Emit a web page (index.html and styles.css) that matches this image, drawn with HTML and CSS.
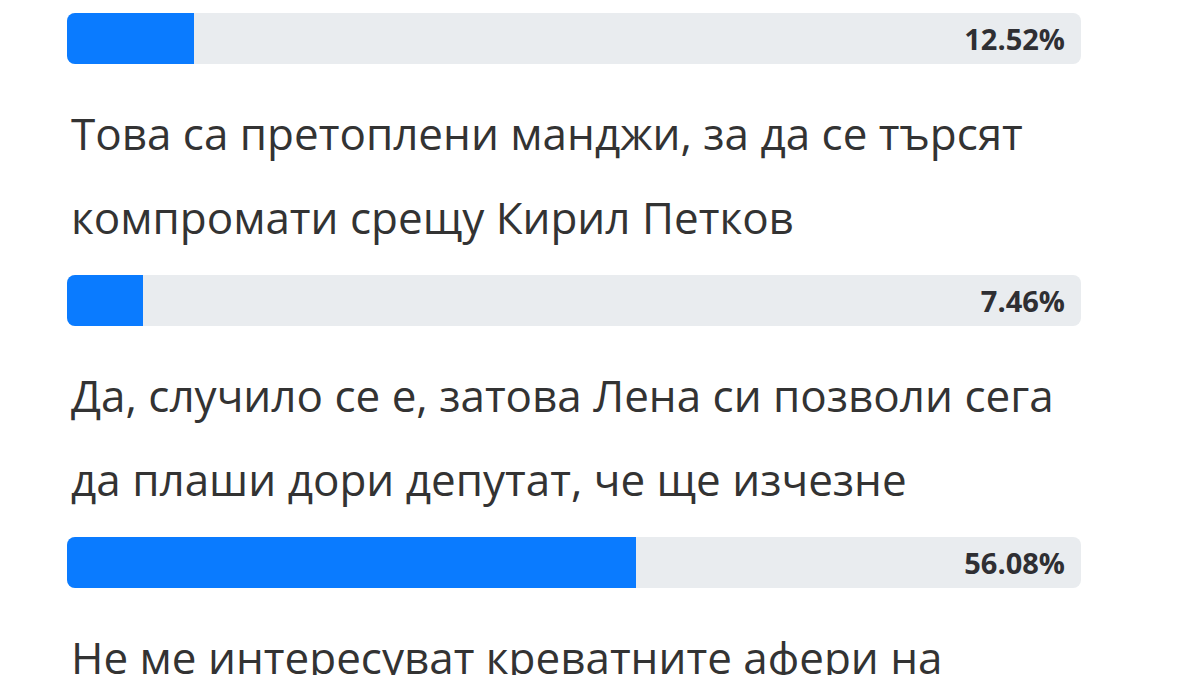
FILE: index.html
```html
<!DOCTYPE html>
<html lang="bg">
<head>
<meta charset="utf-8">
<title>Анкета</title>
<link rel="stylesheet" href="styles.css">
</head>
<body>
<div class="poll">
  <div class="bar first"><div class="fill" style="width:12.52%"></div><span class="pct">12.52%</span></div>
  <div class="option">Това са претоплени манджи, за да се търсят компромати срещу Кирил Петков</div>
  <div class="bar"><div class="fill" style="width:7.46%"></div><span class="pct">7.46%</span></div>
  <div class="option">Да, случило се е, затова Лена си позволи сега да плаши дори депутат, че ще изчезне</div>
  <div class="bar"><div class="fill" style="width:56.08%"></div><span class="pct">56.08%</span></div>
  <div class="option">Не ме интересуват креватните афери на политиците</div>
</div>
</body>
</html>
```
FILE: styles.css
```css
html, body {
  margin: 0;
  padding: 0;
  background: #ffffff;
  overflow: hidden;
}
.poll {
  width: 1014px;
  margin-left: 67px;
  font-family: "Open Sans", "Liberation Sans", sans-serif;
  color: #333333;
}
.bar {
  position: relative;
  height: 51px;
  background: #e9ecef;
  border-radius: 8px;
  overflow: hidden;
  display: flex;
  align-items: center;
  justify-content: flex-end;
}
.bar.first {
  margin-top: 13px;
}
.fill {
  position: absolute;
  left: 0;
  top: 0;
  bottom: 0;
  background: #0a7bff;
}
.pct {
  position: relative;
  padding-right: 16px;
  font-weight: 700;
  font-size: 29px;
  color: #2f2f33;
}
.option {
  font-size: 44px;
  line-height: 84px;
  padding-left: 4px;
  margin: 27px 0 16px;
  width: 1006px;
}
```
